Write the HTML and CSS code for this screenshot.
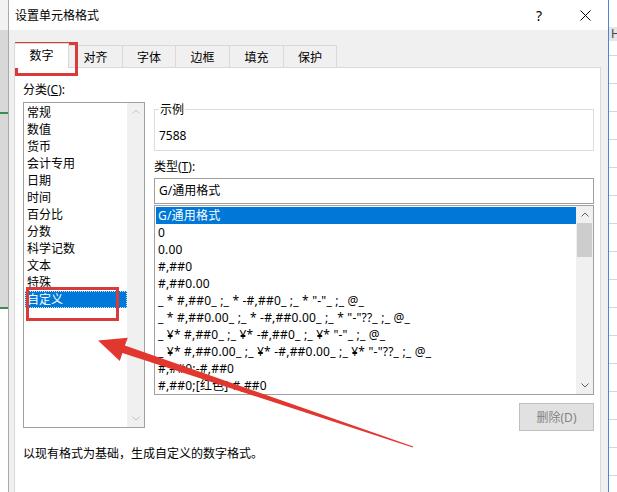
FILE: index.html
```html
<!DOCTYPE html>
<html lang="zh-CN">
<head>
  <meta charset="UTF-8">
  <title>设置单元格格式</title>
  <link rel="stylesheet" href="styles.css">
</head>
<body>
  <div class="sheet sheet-left"></div>

  <div class="dialog">
    <div class="titlebar">
      <span class="title">设置单元格格式</span>
      <span class="title-btn help">?</span>
      <span class="title-btn close">
        <svg width="11" height="11" viewBox="0 0 11 11"><path d="M0.5 0.5 L10.5 10.5 M10.5 0.5 L0.5 10.5" stroke="#000" stroke-width="1" fill="none"/></svg>
      </span>
    </div>

    <div class="body">
      <div class="tabs">
        <div class="tab active">数字</div>
        <div class="tab">对齐</div>
        <div class="tab narrow">字体</div>
        <div class="tab">边框</div>
        <div class="tab">填充</div>
        <div class="tab narrow">保护</div>
      </div>

      <div class="panel">
        <div class="columns">
          <div class="col-left">
            <div class="label">分类(<u>C</u>):</div>
            <div class="listbox category">
              <ul class="items">
                <li>常规</li>
                <li>数值</li>
                <li>货币</li>
                <li>会计专用</li>
                <li>日期</li>
                <li>时间</li>
                <li>百分比</li>
                <li>分数</li>
                <li>科学记数</li>
                <li>文本</li>
                <li>特殊</li>
                <li class="selected focused">自定义</li>
              </ul>
              <div class="scrollbar disabled">
                <div class="arrow"><svg width="8" height="5" viewBox="0 0 8 5"><path d="M0.5 4.5 L4 1 L7.5 4.5" fill="none" stroke="#c2c2c2"/></svg></div>
                <div class="track"></div>
                <div class="arrow"><svg width="8" height="5" viewBox="0 0 8 5"><path d="M0.5 0.5 L4 4 L7.5 0.5" fill="none" stroke="#c2c2c2"/></svg></div>
              </div>
            </div>
          </div>

          <div class="col-right">
            <fieldset class="sample">
              <legend>示例</legend>
              <div class="sample-value">7588</div>
            </fieldset>

            <div class="label type-label">类型(<u>T</u>):</div>
            <div class="input">G/通用格式</div>

            <div class="listbox types">
              <ul class="items">
                <li class="selected">G/通用格式</li>
                <li>0</li>
                <li>0.00</li>
                <li>#,##0</li>
                <li>#,##0.00</li>
                <li>_ * #,##0_ ;_ * -#,##0_ ;_ * "-"_ ;_ @_ </li>
                <li>_ * #,##0.00_ ;_ * -#,##0.00_ ;_ * "-"??_ ;_ @_ </li>
                <li>_ ¥* #,##0_ ;_ ¥* -#,##0_ ;_ ¥* "-"_ ;_ @_ </li>
                <li>_ ¥* #,##0.00_ ;_ ¥* -#,##0.00_ ;_ ¥* "-"??_ ;_ @_ </li>
                <li>#,##0;-#,##0</li>
                <li>#,##0;[红色]-#,##0</li>
              </ul>
              <div class="scrollbar">
                <div class="arrow"><svg width="8" height="5" viewBox="0 0 8 5"><path d="M0.5 4.5 L4 1 L7.5 4.5" fill="none" stroke="#606060"/></svg></div>
                <div class="track"><div class="thumb"></div></div>
                <div class="arrow"><svg width="8" height="5" viewBox="0 0 8 5"><path d="M0.5 0.5 L4 4 L7.5 0.5" fill="none" stroke="#606060"/></svg></div>
              </div>
            </div>

            <div class="actions">
              <button class="btn" disabled>删除(D)</button>
            </div>
          </div>
        </div>

        <p class="hint">以现有格式为基础，生成自定义的数字格式。</p>
      </div>
    </div>
  </div>

  <div class="sheet sheet-right">
    <div class="col-head">H</div>
  </div>

  <!-- annotation marks drawn over the screenshot -->
  <svg class="marks" width="617" height="492" viewBox="0 0 617 492">
    <rect x="16.5" y="43.5" width="60" height="31" fill="none" stroke="#d93a3a" stroke-width="3"/>
    <rect x="27.5" y="288.5" width="90" height="31" fill="none" stroke="#d93a3a" stroke-width="3"/>
    <polygon points="98,340.5 127.8,337.8 124.9,345.6 413.2,446.4 412.8,447.6 122.4,353 119.8,361" fill="#e2372f"/>
  </svg>
</body>
</html>
```

FILE: styles.css
```css
* {
  margin: 0;
  padding: 0;
  box-sizing: border-box;
}

body {
  width: 617px;
  height: 492px;
  overflow: hidden;
  position: relative;
  display: flex;
  font-family: "Segoe UI", "Noto Sans", "Noto Sans CJK SC", sans-serif;
  font-size: 12px;
  color: #000;
  background: #fff;
}

/* excel sheet peeking out behind the dialog */
.sheet {
  width: 8px;
  flex: none;
  overflow: hidden;
}

.sheet-left {
  background:
    linear-gradient(to bottom, transparent 0 112px, #3c8a5a 112px 114px, transparent 114px 307px, #3c8a5a 307px 309px, transparent 309px),
    linear-gradient(to bottom, #f2f2f2 0 30px, #d8d8d8 30px 307px, #fff 307px),
    #fff;
}

.sheet-right {
  padding-top: 27px;
  background: repeating-linear-gradient(to bottom, #fff 0 27px, #d6d6d6 27px 28px);
}

.col-head {
  height: 14px;
  line-height: 14px;
  padding-left: 2px;
  background: #e6e6e6;
  color: #444;
}

/* dialog */
.dialog {
  width: 601px;
  flex: none;
  display: flex;
  flex-direction: column;
  background: #f0f0f0;
  border-left: 1px solid #a9a9a9;
  border-right: 1px solid #3f8bd6;
}

.titlebar {
  height: 30px;
  flex: none;
  display: flex;
  align-items: center;
  background: #fff;
}

.title {
  flex: 1;
  padding-left: 6px;
}

.title-btn {
  width: 46px;
  height: 30px;
  display: flex;
  align-items: center;
  justify-content: center;
}

.help {
  font-size: 14px;
}

.body {
  flex: 1;
  display: flex;
  flex-direction: column;
  padding: 13px 7px 0 5px;
}

.tabs {
  height: 24px;
  flex: none;
  display: flex;
  align-items: flex-end;
}

.tab {
  width: 55px;
  height: 22px;
  display: flex;
  align-items: center;
  justify-content: center;
  background: #f0f0f0;
  border: 1px solid #d9d9d9;
  border-bottom: none;
}

.tab + .tab {
  margin-left: -1px;
}

.tab.narrow {
  width: 54px;
}

.tab.active {
  height: 25px;
  margin-bottom: -1px;
  padding-bottom: 2px;
  background: #fff;
  position: relative;
  z-index: 1;
}

.panel {
  flex: 1;
  background: #fff;
  border: 1px solid #d9d9d9;
  border-bottom: none;
  padding: 13px 6px 0 8px;
}

.columns {
  display: grid;
  grid-template-columns: 122px 1fr;
  column-gap: 9px;
  align-items: start;
}

.label {
  line-height: 17px;
}

/* list boxes */
.listbox {
  display: flex;
  background: #fff;
  border: 1px solid #a0a0a0;
  overflow: hidden;
}

.category {
  height: 326px;
  margin-top: 4px;
}

.types {
  height: 190px;
  margin-top: 1px;
}

.items {
  flex: 1;
  min-width: 0;
  list-style: none;
  padding-top: 1px;
  overflow: hidden;
}

.items li {
  height: 17px;
  line-height: 17px;
  white-space: pre;
}

.category .items li {
  margin-left: 1px;
  padding-left: 2px;
}

.types .items li {
  margin-left: 1px;
  padding-left: 2px;
  letter-spacing: 0.2px;
}

.items li.selected {
  background: #0078d7;
  color: #fff;
}

.items li.focused {
  outline: 1px dotted #cfe4f7;
  outline-offset: -1px;
}

.scrollbar {
  width: 17px;
  flex: none;
  display: flex;
  flex-direction: column;
  background: #f0f0f0;
}

.arrow {
  height: 17px;
  flex: none;
  display: flex;
  align-items: center;
  justify-content: center;
}

.track {
  flex: 1;
  padding: 0 1px;
}

.thumb {
  height: 34px;
  background: #cdcdcd;
}

/* right column */
.sample {
  margin-top: 20px;
  padding: 9px 4px 6px;
  border: 1px solid #dcdcdc;
}

.sample legend {
  padding: 0 1px;
  line-height: 17px;
}

.sample-value {
  line-height: 17px;
}

.type-label {
  margin-top: 7px;
}

.input {
  height: 26px;
  margin-top: 3px;
  padding-left: 4px;
  line-height: 24px;
  border: 1px solid #a0a0a0;
  background: #fff;
}

.actions {
  display: flex;
  justify-content: flex-end;
  margin-top: 8px;
}

.btn {
  width: 75px;
  height: 28px;
  font: inherit;
  color: #838383;
  background: #e1e1e1;
  border: 1px solid #bfbfbf;
}

.hint {
  margin-top: 14px;
  line-height: 17px;
}

.marks {
  position: absolute;
  top: 0;
  left: 0;
  pointer-events: none;
}
```
